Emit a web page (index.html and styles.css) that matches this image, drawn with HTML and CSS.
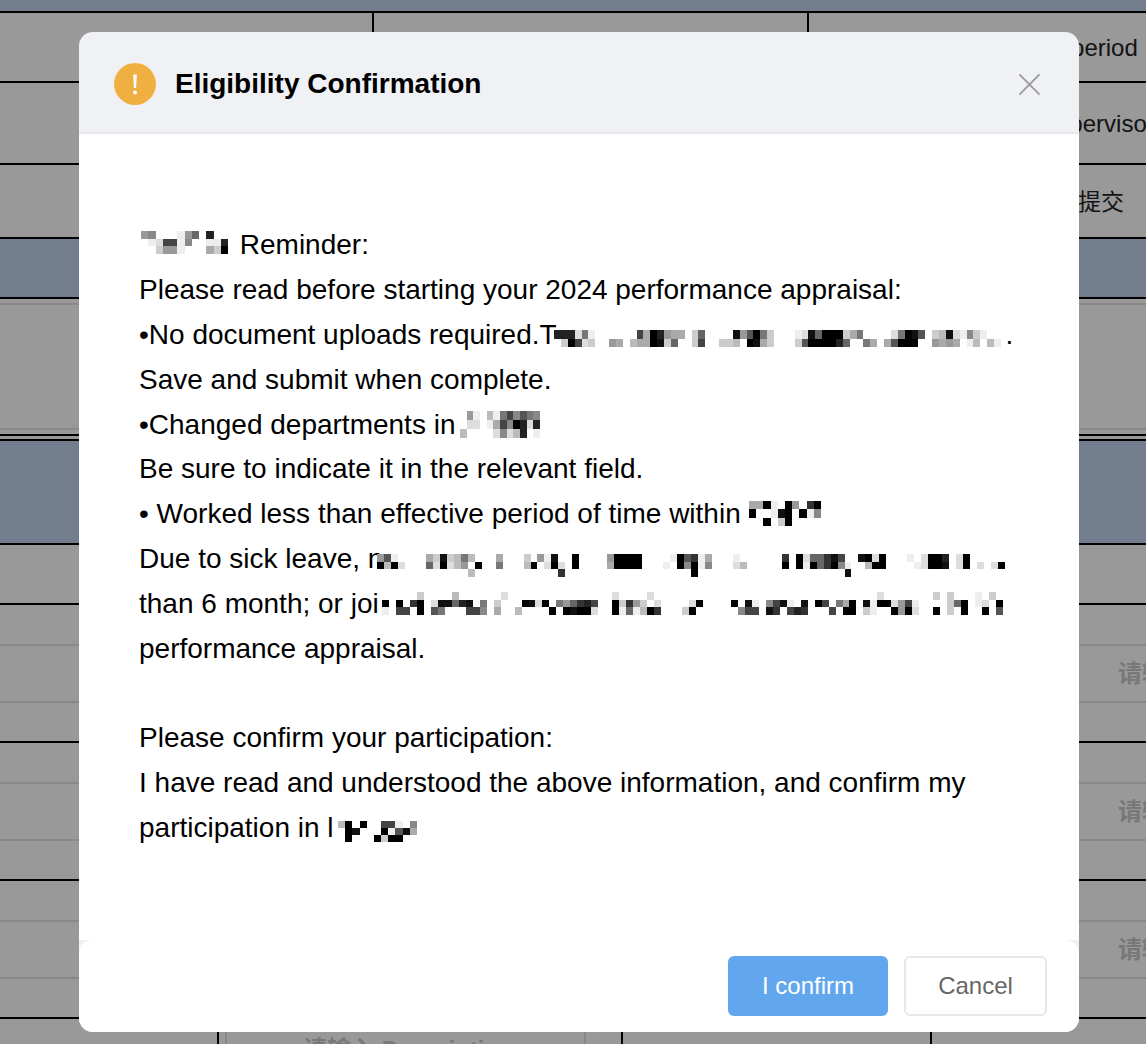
FILE: index.html
```html
<!DOCTYPE html>
<html lang="en">
<head>
    <meta charset="UTF-8">
    <meta name="viewport" content="width=device-width, initial-scale=1.0">
    <title>Eligibility Confirmation</title>
    <link rel="stylesheet" href="styles.css">
</head>
<body>
    <div class="sheet">
        <div class="band band-top"></div>
        <div class="row row-a cols-top">
            <div class="cell"></div>
            <div class="cell"></div>
            <div class="cell label label-period">Rating period</div>
        </div>
        <div class="row row-b"><div class="label label-super">Supervisor</div></div>
        <div class="row row-c"><div class="label label-submit">提交</div></div>
        <div class="band band-mid"></div>
        <div class="row row-d"><div class="inner-box"></div></div>
        <div class="row row-gap"></div>
        <div class="band band-large"></div>
        <div class="row row-e"></div>
        <div class="row row-input"><div class="input-line"><span class="hint">请输入内容</span></div></div>
        <div class="row row-input"><div class="input-line"><span class="hint">请输入内容</span></div></div>
        <div class="row row-input"><div class="input-line"><span class="hint">请输入内容</span></div></div>
        <div class="row-last cols-bottom">
            <div class="cell"></div>
            <div class="cell"><div class="desc-box">请输入 Description</div></div>
            <div class="cell"></div>
            <div class="cell"></div>
        </div>
    </div>

    <div class="mask"></div>

    <div class="modal">
        <div class="modal-header">
            <svg class="warn-icon" viewBox="0 0 42 42">
                <circle cx="21" cy="21" r="21" fill="#f0b041"/>
                <path d="M19.2 11.5h3.6l-.7 13.5h-2.2z" fill="#fff"/>
                <circle cx="21" cy="29.5" r="1.9" fill="#fff"/>
            </svg>
            <h2 class="modal-title">Eligibility Confirmation</h2>
            <svg class="close-icon" viewBox="0 0 24 24">
                <path d="M1.5 1.5l21 21M22.5 1.5l-21 21" stroke="#9c9c9c" stroke-width="2" fill="none"/>
            </svg>
        </div>
        <div class="modal-body">
            <svg class="mosaic m-first" data-rows="670001690d00,012bb170011d,00366100053f"></svg> Reminder:<br>
            Please read before starting your 2024 performance appraisal:<br>
            •No document uploads required.T<svg class="mosaic m-type"></svg>.<br>
            Save and submit when complete.<br>
            •Changed departments in <svg class="mosaic m-dept" data-rows="0610418b7a87,022015b7fd2d,400002724d01"></svg><br>
            Be sure to indicate it in the relevant field.<br>
            • Worked less than effective period of time within <svg class="mosaic m-within" data-rows="55f10f60cf,f001ef0f17,00f03f0000"></svg><br>
            Due to sick leave, n<svg class="mosaic m-wide m-sick"></svg><br>
            than 6 month; or joi<svg class="mosaic m-wide m-join"></svg><br>
            performance appraisal.<br>
            <br>
            Please confirm your participation:<br>
            I have read and understood the above information, and confirm my<br>
            participation in l<svg class="mosaic m-part" data-rows="4f0f00bb107,0fe000f1ae5,0f000f3ff00"></svg>
        </div>
        <div class="modal-footer">
            <button class="btn btn-primary">I confirm</button>
            <button class="btn btn-plain">Cancel</button>
        </div>
    </div>

    <script src="mosaic.js"></script>
</body>
</html>
```
FILE: styles.css
```css
html, body {
    margin: 0;
    height: 100%;
    overflow: hidden;
}
body {
    font-family: "Liberation Sans", "Noto Sans CJK SC", Arial, sans-serif;
    background-color: #fff;
    color: #000;
}
.band {
    background-color: #bed2eb;
    border-bottom: 2px solid #000;
}
.band-top { height: 11px; }
.band-mid { height: 58px; }
.band-large { height: 102px; }
.row {
    border-bottom: 2px solid #000;
    box-sizing: border-box;
}
.row-a { height: 70px; }
.row-b { height: 82px; }
.row-c { height: 74px; }
.row-d {
    height: 137px;
    padding-top: 4px;
}
.row-gap { height: 5px; }
.row-e { height: 60px; }
.row-input {
    height: 138px;
    padding-top: 39px;
}
.row-last { height: 25px; }
.cols-top {
    display: grid;
    grid-template-columns: 372px 435px 339px;
}
.cols-bottom {
    display: grid;
    grid-template-columns: 217px 404px 309px 216px;
}
.cell {
    border-left: 2px solid #000;
    box-sizing: border-box;
}
.cell:first-child { border-left: none; }
.label {
    font-size: 24px;
    color: #222;
    white-space: nowrap;
    overflow: hidden;
}
.label-period { padding: 21px 0 0 186px; }
.label-super { padding: 27px 0 0 1040px; }
.label-submit {
    padding: 18px 0 0 1078px;
    font-size: 23px;
}
.inner-box {
    height: 127px;
    border-top: 2px solid #e3e3e3;
    border-bottom: 2px solid #e3e3e3;
    box-sizing: border-box;
}
.input-line {
    height: 59px;
    border-top: 2px solid #e3e3e3;
    border-bottom: 2px solid #e3e3e3;
    box-sizing: border-box;
    padding: 8px 0 0 1118px;
    white-space: nowrap;
    overflow: hidden;
}
.hint, .desc-box {
    font-size: 24px;
    font-weight: bold;
    color: #c8c8c8;
}
.desc-box {
    margin-left: 6px;
    width: 361px;
    height: 100%;
    box-sizing: border-box;
    border-left: 2px solid #e3e3e3;
    border-right: 2px solid #e3e3e3;
    padding: 11px 0 0 6px;
    text-align: center;
    white-space: nowrap;
}
.mask {
    position: fixed;
    inset: 0;
    background-color: rgba(0, 0, 0, 0.4);
}
.modal {
    position: fixed;
    left: 79px;
    top: 32px;
    width: 1000px;
    height: 1000px;
    border-radius: 14px;
    background-color: #f0f1f5;
    display: flex;
    flex-direction: column;
    overflow: hidden;
}
.modal-header {
    height: 102px;
    box-sizing: border-box;
    display: flex;
    align-items: center;
    padding: 4px 38px 0 35px;
    border-bottom: 2px solid #e8e8e8;
}
.warn-icon {
    width: 42px;
    height: 42px;
    flex: none;
}
.modal-title {
    margin: 0 0 0 19px;
    flex: 1;
    font-size: 28px;
    font-weight: bold;
}
.close-icon {
    width: 23px;
    height: 23px;
    margin-top: 1px;
}
.modal-body {
    flex: 1;
    background-color: #fff;
    box-sizing: border-box;
    padding: 89.4px 0 0 60px;
    font-size: 28px;
    line-height: 44.8px;
    white-space: nowrap;
}
.mosaic {
    display: inline-block;
    vertical-align: -2px;
}
.m-first { width: 87px; height: 23px; margin: 0 4px 0 2px; vertical-align: 0; }
.m-type { width: 447px; height: 17px; margin: 0 5px 0 -3px; vertical-align: -3px; }
.m-dept { width: 80px; height: 27px; margin-left: -3px; vertical-align: -4px; }
.m-within { width: 72px; height: 25px; vertical-align: -3px; }
.m-wide { width: 628px; height: 23px; }
.m-sick { margin-left: -6px; vertical-align: -9px; }
.m-join { margin-left: -4px; vertical-align: -2px; }
.m-part { width: 79px; height: 21px; margin-left: 4px; vertical-align: -5px; }
.modal-footer {
    background-color: #fff;
    border-radius: 14px 14px 0 0;
    display: flex;
    justify-content: flex-end;
    gap: 16px;
    padding: 16px 32px;
}
.btn {
    height: 60px;
    font-family: inherit;
    font-size: 24px;
    border-radius: 6px;
    box-sizing: border-box;
}
.btn-primary {
    width: 160px;
    background-color: #62a7ee;
    border: none;
    color: #fff;
}
.btn-plain {
    width: 143px;
    background-color: #fff;
    border: 2px solid #e8e8e8;
    color: #666;
}
```
FILE: mosaic.js
```js
// pixelated (redacted) bits of the text, one hex digit per cell: 0 is white, f is black
const wideRows = {
    "m-sick": [
        "6a1000053e348400050003061e00f00006ffff00001f" + "ac150001000000c0f299ceb00ef2f000102ffd02f00000",
        "f4f2000" + "92f2460f008000" + "4f02f20f00005ffff00010f" + "7f1700024000" + "00f0f1f9cf71004ff000012ffe02f0202f",
        "00000000000004000000000000c000000000000000000f000000000000000000000e"
    ],
    "m-join": [
        "000000300004000000200000000000000020000200000000000000000000000000000000200000003030001" + "03",
        "0f0f0cf02ee9de0803000fe2f0869cdb00f3c6302000" + "02f0000f0e107be10e0fb085f0e1ff26b1000039f0120f",
        "010bb0f0a8000bb70500" + "40000f0feff200f1914fc000" + "3f0000007bb0ec0bdc000b0ff03100f6f200f030f00f0a"
    ],
    "m-type": [
        "ddd281000000b5fd655039" + "0000e6af83000" + "12e9fff358" + "000028fea034e2173100",
        "03fb23006504" + "55fe39003b00334" + "0fe530003affffd900850" + "5afff0065650" + "1404" + "1"
    ]
};

document.querySelectorAll(".mosaic").forEach(function (el) {
    let rows = el.dataset.rows ? el.dataset.rows.split(",") : [];
    Object.keys(wideRows).forEach(function (name) {
        if (el.classList.contains(name)) rows = wideRows[name];
    });
    const cols = Math.max.apply(null, rows.map(function (r) { return r.length; }));
    el.setAttribute("viewBox", "0 0 " + cols + " " + rows.length);
    el.setAttribute("preserveAspectRatio", "none");
    el.setAttribute("shape-rendering", "crispEdges");
    let cells = "";
    rows.forEach(function (row, y) {
        row.split("").forEach(function (ch, x) {
            const level = parseInt(ch, 16);
            if (!level) return;
            const v = 255 - level * 17;
            cells += '<rect x="' + x + '" y="' + y + '" width="1" height="1" fill="rgb(' + v + ',' + v + ',' + v + ')"/>';
        });
    });
    el.innerHTML = cells;
});
```
